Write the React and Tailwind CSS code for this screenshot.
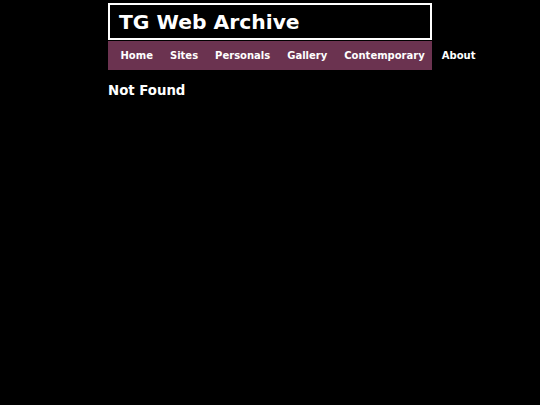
export default function App() {
  const items = ["Home", "Sites", "Personals", "Gallery", "Contemporary", "About"];
  return (
    <div className="min-h-[405px] w-full bg-black text-white" style={{ fontFamily: '"DejaVu Sans", Verdana, sans-serif' }}>
      <div className="mx-auto w-[324px] pt-[3px]">
        <div className="flex h-[37px] items-center border-2 border-white pl-[9px]">
          <span className="text-[20.3px] font-bold leading-[24px]">TG Web Archive</span>
        </div>
        <nav className="mt-[1px] flex h-[29px] items-center bg-[#6b3350] pl-[4px]">
          {items.map((it) => (
            <a key={it} className="whitespace-nowrap px-[8.5px] text-[10px] font-bold leading-[12px] text-white">
              {it}
            </a>
          ))}
        </nav>
        <h1 className="mt-[13px] text-[13.3px] font-bold leading-[15px]">Not Found</h1>
      </div>
    </div>
  );
}
